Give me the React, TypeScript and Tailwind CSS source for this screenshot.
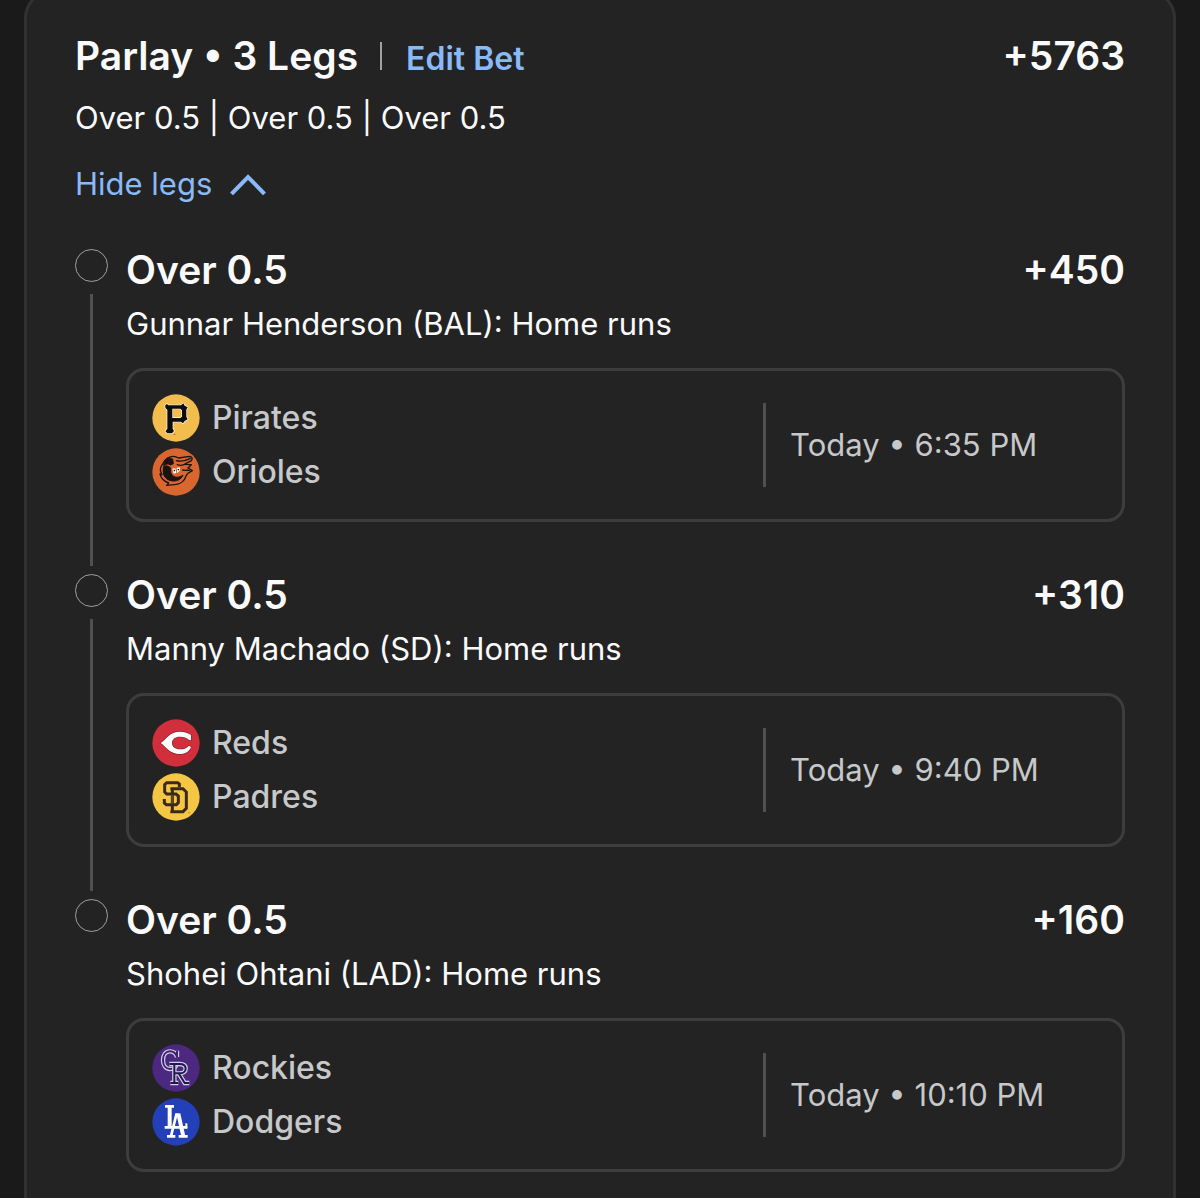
import { useState } from "react";
import type { ReactNode } from "react";

type Team = { name: string; logo: ReactNode };

type Leg = {
  pick: string;
  market: string;
  odds: string;
  time: string;
  teams: Team[];
};

const logoClass = "size-12 shrink-0";

function PiratesLogo() {
  return (
    <svg viewBox="0 0 144 144" className={logoClass} aria-hidden="true">
      <circle cx="72" cy="72" r="71" fill="#f3bd4e" />
      <path
        d="M40 33 L45 30 L49 34 H87 L94 28 L98 35 L107 40 L103 47 V68 L107 76 L98 81 L93 88 L86 83 H62 V104 L66 111 L60 118 H46 L40 112 L46 104 V47 L40 42 Z M61 44 H85 L90 49 V68 L85 72 H61 Z"
        fill="#0d0d0d"
        fillRule="evenodd"
        stroke="#fff"
        strokeWidth="4"
        strokeLinejoin="round"
        paintOrder="stroke"
      />
      <path d="M63 47 H83 L87 51 V66 L83 69 H63 Z" fill="#f3bd4e" />
      <path d="M64 121 h7" stroke="#9a4a22" strokeWidth="2" />
    </svg>
  );
}

function OriolesLogo() {
  return (
    <svg viewBox="0 0 144 144" className={logoClass} aria-hidden="true">
      <circle cx="72" cy="72" r="71" fill="#d9662f" />
      <g stroke="#1a1310" strokeLinejoin="round" strokeLinecap="round">
        <path
          d="M39 37 C49 24 66 22 80 30 L112 25 C120 25 123 32 118 38 L97 49 L118 50 L108 60 L121 68 C112 72 106 76 102 84 C98 99 84 109 68 110 L44 112 L50 105 C36 100 27 90 24 78 L30 80 C24 70 24 60 29 53 Z"
          fill="#d9662f"
          strokeWidth="4"
        />
        <path d="M37 40 C45 30 54 29 62 33 L64 47 L56 51 C50 46 42 47 36 53 Z" fill="#1a1310" strokeWidth="3" />
        <path
          d="M35 57 C29 78 39 94 56 98 C72 102 88 95 93 81 C84 89 70 90 62 83 L56 74 L56 60 C48 52 41 52 35 57 Z"
          fill="#1a1310"
          strokeWidth="3"
        />
        <path d="M73 38 C88 42 102 38 115 31 M96 50 C88 53 82 53 76 50 M92 66 C98 68 105 66 112 67" fill="none" strokeWidth="4" />
      </g>
      <path d="M61 62 L70 61 L73 75 L65 77 Z M74 60 L84 58 L83 69 L76 75 Z" fill="#fff" />
      <path d="M67 65 v5 M79 63 v4" stroke="#1a1310" strokeWidth="4" />
    </svg>
  );
}

function RedsLogo() {
  return (
    <svg viewBox="0 0 144 144" className={logoClass} aria-hidden="true">
      <circle cx="72" cy="72" r="71" fill="#d22f3d" />
      <path
        d="M26 72 C44 60 52 38 84 38 C98 38 109 42 117 48 V64 L111 63 C104 56 95 53 85 53 C68 53 60 61 60 72 C60 83 68 91 85 91 C96 91 105 87 111 80 L117 84 C112 98 100 105 84 105 C52 105 44 84 26 72 Z"
        fill="#fff"
        stroke="#8e1f2b"
        strokeWidth="4"
        paintOrder="stroke"
      />
    </svg>
  );
}

function PadresLogo() {
  return (
    <svg viewBox="0 0 144 144" className={logoClass} aria-hidden="true">
      <circle cx="72" cy="72" r="71" fill="#f5c644" />
      <g fill="none" stroke="#3a2a1c" strokeWidth="9">
        <path d="M82 43 V33 L77 29 H44 L38 35 V57 L44 63 H72 L79 69 V89 L73 95 H43 L37 90 V78" />
        <path d="M55 47 H93 L103 57 V106 L93 116 H55 M61 47 V116" />
      </g>
      <path d="M60 66 V92" fill="none" stroke="#a88636" strokeWidth="2" />
      <circle cx="111" cy="119" r="2" fill="#8a6a2c" />
    </svg>
  );
}

const rockiesC = "M75 39 C71 27 63 22 54 22 C41 22 33 33 33 48 C33 64 41 75 54 75 C63 75 71 70 75 60 M75 20 V39";
const rockiesR =
  "M52 60 H83 C97 60 101 67 101 74 C101 82 94 88 83 88 H67 M67 60 V117 M55 117 H79 M80 88 L98 117 H112";

function RockiesLogo() {
  return (
    <svg viewBox="0 0 144 144" className={logoClass} aria-hidden="true">
      <circle cx="72" cy="72" r="71" fill="#4c2881" />
      <g fill="none">
        <path d={rockiesC} stroke="#d5d0e4" strokeWidth="13" />
        <path d={rockiesC} stroke="#3a2172" strokeWidth="6" />
        <path d={rockiesR} stroke="#d5d0e4" strokeWidth="13" />
        <path d={rockiesR} stroke="#1f1850" strokeWidth="6" />
      </g>
    </svg>
  );
}

function DodgersLogo() {
  return (
    <svg viewBox="0 0 144 144" className={logoClass} aria-hidden="true">
      <circle cx="72" cy="72" r="71" fill="#2440b8" />
      <g fill="none" stroke="#fff">
        <path d="M39 25 H66 M38 88 H106 M45 115 H70 M80 115 H107" strokeWidth="8" />
        <path d="M53 25 V88" strokeWidth="12" />
        <path d="M103 76 V91" strokeWidth="6" />
        <path d="M57 115 L73 50 H80" strokeWidth="8" />
        <path d="M79 47 L94 115" strokeWidth="12" />
      </g>
    </svg>
  );
}

const legs: Leg[] = [
  {
    pick: "Over 0.5",
    market: "Gunnar Henderson (BAL): Home runs",
    odds: "+450",
    time: "Today • 6:35 PM",
    teams: [
      { name: "Pirates", logo: <PiratesLogo /> },
      { name: "Orioles", logo: <OriolesLogo /> },
    ],
  },
  {
    pick: "Over 0.5",
    market: "Manny Machado (SD): Home runs",
    odds: "+310",
    time: "Today • 9:40 PM",
    teams: [
      { name: "Reds", logo: <RedsLogo /> },
      { name: "Padres", logo: <PadresLogo /> },
    ],
  },
  {
    pick: "Over 0.5",
    market: "Shohei Ohtani (LAD): Home runs",
    odds: "+160",
    time: "Today • 10:10 PM",
    teams: [
      { name: "Rockies", logo: <RockiesLogo /> },
      { name: "Dodgers", logo: <DodgersLogo /> },
    ],
  },
];

function LegItem({ leg, last }: { leg: Leg; last: boolean }) {
  return (
    <li className="flex gap-[19px]">
      {/* timeline rail */}
      <div className="flex w-8 shrink-0 flex-col items-center">
        <span className="size-[33px] shrink-0 rounded-full border border-[#a0a0a0]" />
        {!last && <span className="mt-3 mb-2 w-[3px] grow bg-[#505050]" />}
      </div>

      <div className="min-w-0 grow pb-[52px]">
        <div className="flex items-center justify-between text-[39px] leading-[42px] font-semibold">
          <h2>{leg.pick}</h2>
          <span>{leg.odds}</span>
        </div>
        <p className="mt-[13px] text-[31px] leading-10">{leg.market}</p>

        <div className="mt-6 flex items-center rounded-[18px] border-3 border-[#3d3d3d] py-[23px] pl-[23px] text-[#c6c8ca]">
          <ul className="flex grow flex-col gap-1.5">
            {leg.teams.map((team) => (
              <li key={team.name} className="flex items-center gap-3 text-[32px] leading-[48px] font-medium">
                {team.logo}
                {team.name}
              </li>
            ))}
          </ul>
          <p className="w-[37%] border-l-3 border-[#505050] pl-6 text-[31px] leading-[84px]">{leg.time}</p>
        </div>
      </div>
    </li>
  );
}

export default function App() {
  const [open, setOpen] = useState(true);

  return (
    <div className="flex min-h-screen overflow-hidden bg-[#1a1a1a] px-6 font-['Inter','Liberation_Sans',sans-serif] text-[#fafafa]">
      <main className="-mt-2.5 grow rounded-t-[28px] border-x-3 border-t-3 border-[#323232] bg-[#232323] px-12 pt-[38px]">
        <header className="flex items-center justify-between font-semibold">
          <div className="flex items-baseline">
            <h1 className="text-[39px] leading-[50px]">Parlay • 3 Legs</h1>
            <span className="mr-6 ml-[22px] h-7 w-[2px] self-center bg-[#a0a0a0]" />
            <button type="button" className="cursor-pointer text-[32px] leading-10 text-[#8ab9f8]">
              Edit Bet
            </button>
          </div>
          <span className="text-[39px] leading-[50px]">+5763</span>
        </header>

        <p className="mt-[17px] text-[31px] leading-10">Over 0.5 | Over 0.5 | Over 0.5</p>

        <button
          type="button"
          aria-expanded={open}
          onClick={() => setOpen(!open)}
          className="mt-[26px] flex cursor-pointer items-center gap-[18px] text-[31px] leading-10 text-[#8ab9f8]"
        >
          {open ? "Hide legs" : "Show legs"}
          <svg
            viewBox="0 0 36 22"
            className={open ? "h-[22px] w-9" : "h-[22px] w-9 rotate-180"}
            fill="none"
            stroke="currentColor"
            strokeWidth="4"
            aria-hidden="true"
          >
            <path d="M1.500 21 L18 4 L34.500 21" />
          </svg>
        </button>

        {open && (
          <ul className="mt-[45px]">
            {legs.map((leg, i) => (
              <LegItem key={leg.market} leg={leg} last={i === legs.length - 1} />
            ))}
          </ul>
        )}
      </main>
    </div>
  );
}
